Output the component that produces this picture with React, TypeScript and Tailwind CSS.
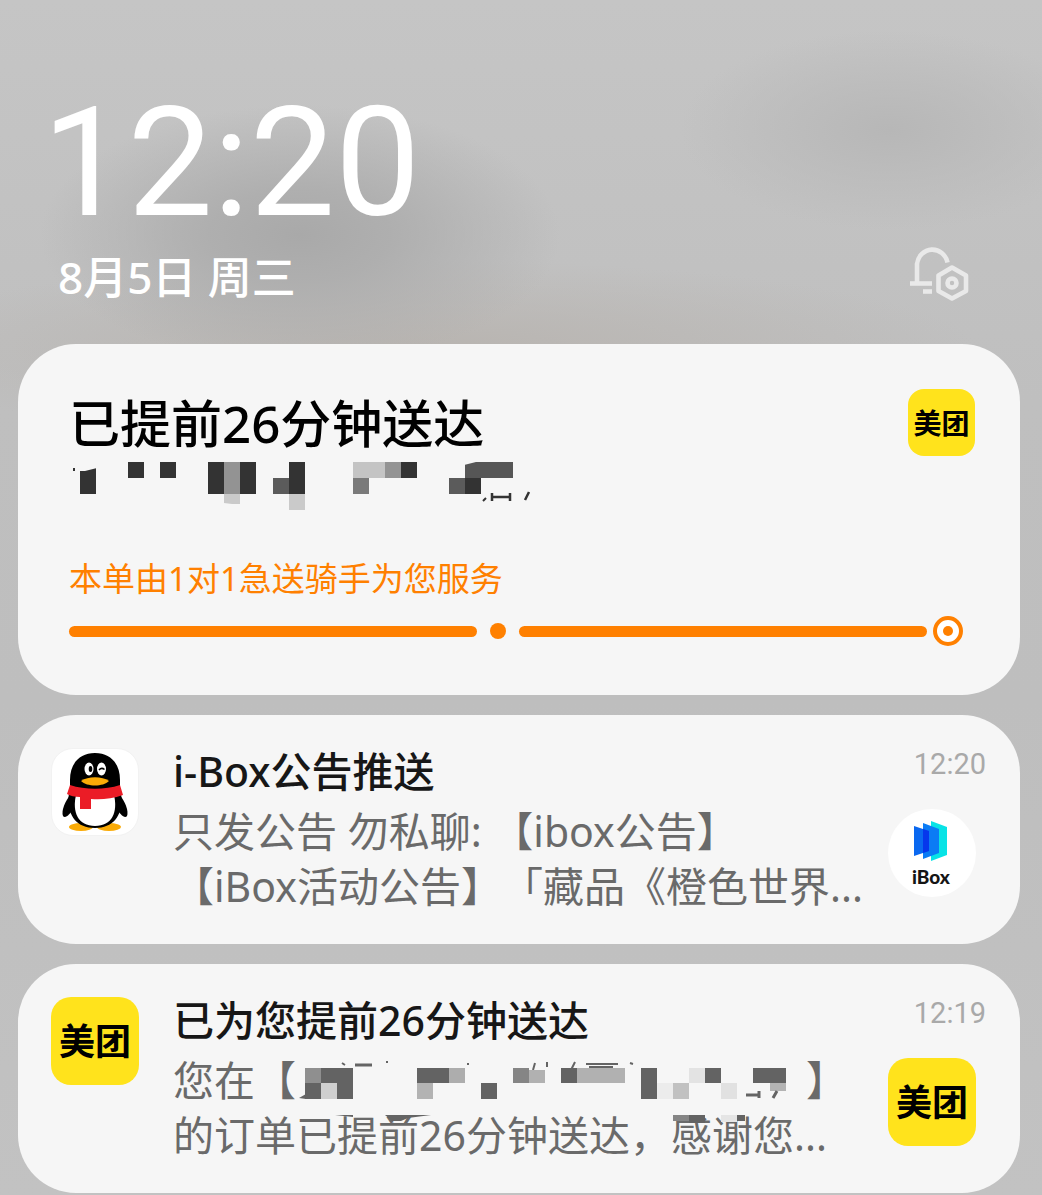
import type { ReactNode } from "react";

type Block = [x: number, y: number, w: number, h: number, fill: string];

const headerBlocks: Block[] = [
  [12, 6, 16, 26, "#333"],
  [60, 0, 16, 16, "#333"],
  [92, 0, 16, 16, "#333"],
  [140, 0, 16, 32, "#333"],
  [156, 0, 16, 32, "#939393"],
  [156, 32, 16, 10, "#cacaca"],
  [172, 0, 16, 32, "#333"],
  [205, 16, 16, 16, "#5b5b5b"],
  [221, 0, 16, 32, "#333"],
  [221, 32, 16, 16, "#cacaca"],
  [285, 0, 32, 16, "#c4c4c4"],
  [317, 0, 16, 16, "#939393"],
  [333, 0, 16, 16, "#333"],
  [285, 16, 16, 16, "#7a7a7a"],
  [397, 0, 48, 16, "#565656"],
  [381, 16, 16, 16, "#5b5b5b"],
  [397, 16, 16, 16, "#333"],
];

const messageBlocks: Block[] = [
  [132, 10, 16, 15, "#8f8f8f"],
  [148, 10, 32, 15, "#636363"],
  [132, 25, 16, 16, "#636363"],
  [148, 25, 16, 16, "#cfcfcf"],
  [164, 25, 16, 16, "#636363"],
  [244, 10, 32, 15, "#636363"],
  [276, 10, 16, 15, "#adadad"],
  [244, 25, 16, 16, "#b3b3b3"],
  [308, 25, 16, 16, "#636363"],
  [340, 10, 16, 15, "#858585"],
  [356, 12, 16, 13, "#b1b1b1"],
  [388, 10, 16, 15, "#636363"],
  [404, 10, 48, 15, "#b1b1b1"],
  [468, 10, 16, 31, "#636363"],
  [484, 25, 16, 16, "#ececec"],
  [500, 25, 16, 16, "#c1c1c1"],
  [516, 10, 16, 15, "#e3e3e3"],
  [532, 10, 16, 15, "#636363"],
  [548, 25, 16, 16, "#e1e1e1"],
  [580, 10, 33, 15, "#636363"],
  [597, 25, 16, 8, "#b3b3b3"],
  [500, 57, 16, 6, "#858585"],
  [516, 57, 16, 8, "#636363"],
  [548, 57, 16, 7, "#e5e5e5"],
  [564, 57, 8, 6, "#636363"],
];

function Blocks({ data }: { data: Block[] }) {
  return (
    <g shapeRendering="crispEdges">
      {data.map(([x, y, w, h, fill]) => (
        <rect key={`${x}-${y}`} x={x} y={y} width={w} height={h} fill={fill} />
      ))}
    </g>
  );
}

function BellSettingsIcon() {
  return (
    <svg width="60" height="56" viewBox="0 0 60 56" fill="none" stroke="#e9e9e9" strokeWidth="4.6">
      <path d="M7 38 V19 A15.500 16.500 0 0 1 37.500 17.500" />
      <path d="M0 38.500 H22" />
      <path d="M13 46.500 H22" />
      <path d="M42 22.500 L56 30.500 V46 L42 53.500 L28.500 46 V30.500 Z" strokeLinejoin="round" />
      <circle cx="42" cy="38" r="4.500" />
    </svg>
  );
}

function MeituanLogo({ small = false }: { small?: boolean }) {
  return (
    <div
      className={
        small
          ? "flex size-[67px] shrink-0 items-center justify-center rounded-2xl bg-[#ffe31c] pb-0.5 font-['Noto_Sans_CJK_SC',sans-serif] text-[28px] leading-none font-bold text-black"
          : "flex size-[88px] shrink-0 items-center justify-center rounded-[20px] bg-[#ffe31c] pb-1 font-['Noto_Sans_CJK_SC',sans-serif] text-[36px] leading-none font-bold text-black"
      }
    >
      美团
    </div>
  );
}

function PenguinLogo() {
  return (
    <div className="size-[88px] shrink-0 rounded-[22px] border border-[#f2f2f2] bg-white">
      <svg width="86" height="86" viewBox="0 0 86 86" aria-label="QQ">
        <ellipse cx="29" cy="78" rx="12" ry="4" fill="#faab07" />
        <ellipse cx="57" cy="78" rx="12" ry="4" fill="#faab07" />
        <path d="M19 45 C13 52 9 62 11 67 C13 70 18 66 22 58 Z" fill="#000" />
        <path d="M67 45 C73 52 77 62 75 67 C73 70 68 66 64 58 Z" fill="#000" />
        <path d="M43 4 C27 4 18 15 18 31 V39 C13 60 20 79 43 79 C66 79 73 60 68 39 V31 C68 15 59 4 43 4 Z" fill="#000" />
        <path d="M24 46 C20 63 26 77 43 77 C60 77 66 63 62 46 Z" fill="#fff" />
        <path d="M18 36 C33 41 53 41 68 36 L71 46 C60 50 48 51 39 50 V60 H28 V48 C23 48 18 47 15 45 Z" fill="#eb1c26" />
        <ellipse cx="37" cy="20" rx="4.500" ry="6.500" fill="#fff" />
        <ellipse cx="49.500" cy="20" rx="4.500" ry="6.500" fill="#fff" />
        <ellipse cx="38.500" cy="20" rx="1.800" ry="3" fill="#000" />
        <path d="M47 21 Q49.500 18 52.500 20.500" fill="none" stroke="#000" strokeWidth="1.500" />
        <path d="M29 32 C36 27 50 27 57 32 C51 38 35 38 29 32 Z" fill="#faab07" />
      </svg>
    </div>
  );
}

function IBoxLogo() {
  return (
    <div className="flex size-[88px] flex-col items-center rounded-full bg-white pt-3 pr-0.5">
      <svg width="34" height="40" viewBox="0 0 34 40">
        <path d="M17 0 L33 6 V34 L17 40 Z" fill="#08e3e6" />
        <path d="M9 2 L25 8 V32 L9 38 Z" fill="#0b7cf5" />
        <path d="M0 5 L15 10 V30 L0 35 Z" fill="#0a68f0" />
        <path d="M9 8 L15 10 V30 L9 32 Z" fill="#0637ec" />
      </svg>
      <span className="mt-1 font-['Lato'] text-[19px] leading-6 font-black text-[#151515]">iBox</span>
    </div>
  );
}

interface NotificationProps {
  icon: ReactNode;
  title: string;
  time: string;
  avatar: ReactNode;
  children: ReactNode;
}

function Notification({ icon, title, time, avatar, children }: NotificationProps) {
  return (
    <article className="flex rounded-[58px] bg-[#f6f6f6] pt-[30px] pr-[34px] pb-[30px] pl-[33px]">
      <div className="mr-[34px] pt-[3px]">{icon}</div>
      <div className="min-w-0 flex-1 pt-0.5">
        <h2 className="text-[41px] leading-[48px] font-medium whitespace-nowrap text-[#171717]">{title}</h2>
        <div className="relative mt-[9px] text-[41px] leading-[55px] font-normal whitespace-nowrap text-[#6a6a6a]">{children}</div>
      </div>
      <div className="flex w-[98px] shrink-0 flex-col">
        <time className="self-end font-['Roboto'] text-[29px] leading-[38px] font-normal text-[#a9a9a9]">{time}</time>
        <div className="mt-[26px]">{avatar}</div>
      </div>
    </article>
  );
}

export default function App() {
  return (
    <main className="min-h-screen bg-[#c2c2c2] bg-[radial-gradient(ellipse_260px_130px_at_300px_235px,#a9a9a9_0%,#acacacdd_35%,#b8b8b800_100%),radial-gradient(ellipse_210px_100px_at_890px_130px,#b7b7b7_0%,#babababb_45%,#c0c0c000_100%),radial-gradient(ellipse_560px_90px_at_420px_350px,#b8b4b0_0%,#bab7b400_100%),linear-gradient(180deg,#c5c5c5_0px,#c2c2c2_200px,#bfbfbf_400px,#bebebe_700px,#c2c2c2_1195px)] pt-[87px] pr-[22px] pb-0.5 pl-[18px] font-['Noto_Sans','Noto_Sans_CJK_SC',sans-serif] [text-spacing-trim:space-all]">
      <header className="flex items-end justify-between pr-[50px] pb-[45px] pl-10 text-white">
        <div>
          <h1 className="-ml-4 font-['Roboto'] text-[152px] leading-none font-normal">12:20</h1>
          <p className="mt-4 text-[44px] leading-none font-medium">8月5日 周三</p>
        </div>
        <button type="button" aria-label="通知设置" className="-mb-0.5">
          <BellSettingsIcon />
        </button>
      </header>

      <div className="flex flex-col gap-5">
        <article className="rounded-[58px] bg-[#f6f6f6] pt-[45px] pr-[45px] pb-[49px] pl-[51px]">
          <div className="flex items-start justify-between">
            <div className="relative pt-1.5">
              <h2 className="text-[51px] leading-[56px] font-medium whitespace-nowrap text-black">已提前26分钟送达</h2>
              <svg className="absolute top-[73px] left-0" width="480" height="50" viewBox="1 0 480 50" aria-hidden="true">
                <path d="M6 6 V9 M14 5 V8 M418 36 L415 39" stroke="#333" strokeWidth="2" />
                <path d="M424 31 V39 M442 31 V39 M424 35 H442 M461 30 L457 38" stroke="#333" strokeWidth="2.500" fill="none" />
                <Blocks data={headerBlocks} />
                <path d="M12 5 H29 V6 L17 9 H12 Z M396 -1 H412 L396 3 Z M156 41 L172 43 H156 Z" fill="#f6f6f6" />
              </svg>
            </div>
            <MeituanLogo small />
          </div>
          <p className="mt-[101px] pt-0.5 text-[33px] leading-10 text-[#ff8000]">本单由1对1急送骑手为您服务</p>
          <div className="mt-[17px] mr-3 flex items-center" role="img" aria-label="配送进度">
            <div className="h-[11px] flex-1 rounded-full bg-[#ff8000]" />
            <div className="mx-[13px] size-4 rounded-full bg-[#ff8000]" />
            <div className="mr-1.5 h-[11px] flex-1 rounded-full bg-[#ff8000]" />
            <div className="flex size-[30px] items-center justify-center rounded-full border-4 border-[#ff8000] bg-white">
              <div className="size-2.5 rounded-full bg-[#ff8000]" />
            </div>
          </div>
        </article>

        <Notification icon={<PenguinLogo />} title="i-Box公告推送" time="12:20" avatar={<IBoxLogo />}>
          <p>只发公告 勿私聊: 【ibox公告】</p>
          <p>【iBox活动公告】「藏品《橙色世界...</p>
        </Notification>

        <Notification icon={<MeituanLogo />} title="已为您提前26分钟送达" time="12:19" avatar={<MeituanLogo />}>
          <p className="flex">
            <span>您在【</span>
            <span className="ml-[510px]">】</span>
          </p>
          <p>的订单已提前26分钟送达，感谢您...</p>
          <svg className="absolute top-[5px] left-0" width="660" height="70" viewBox="0 0 660 70" aria-hidden="true">
            <path d="M182 7 H199" stroke="#646464" strokeWidth="3" />
            <path d="M169 5 L172 7 M213 4 H215 M374 4 V9 M362 5 L360 12 M398 12 L402 4 M295 5 V7 M413 6 H445 M416 9 H440 M457 5 L460 6" stroke="#646464" strokeWidth="2" fill="none" />
            <path d="M126 40 L133 36 V41 Z M162 57 H180 V59 Z M212 57 H258 L235 60 L228 63 H219 Z" fill="#646464" />
            <Blocks data={messageBlocks} />
            <path d="M573 37 H587 M586 33 V40 M604 33 L600 40" stroke="#646464" strokeWidth="3" />
          </svg>
        </Notification>
      </div>
    </main>
  );
}
